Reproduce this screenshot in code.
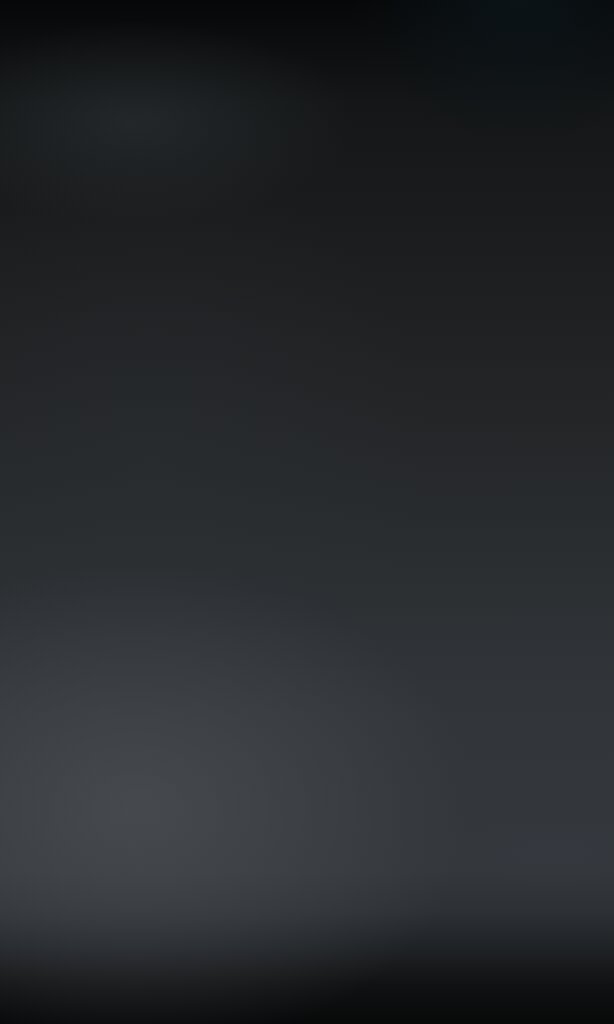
export default function App() {
  return (
    <main className="relative h-[1024px] w-full overflow-hidden bg-[#1c1d1f]">
      {/* base vertical fade */}
      <div className="absolute inset-0 bg-[linear-gradient(to_bottom,#060708_0%,#141617_10%,#1b1c1e_22%,#222426_38%,#2b2e31_55%,#32363a_70%,#33373b_85%,#2d3034_89%,#202326_92.5%,#111213_96%,#070808_100%)]" />
      {/* top-right cool tint */}
      <div className="absolute inset-0 bg-[radial-gradient(ellipse_40%_20%_at_85%_0%,rgba(12,22,26,0.8),transparent_70%)]" />
      {/* top-left glow */}
      <div className="absolute inset-0 bg-[radial-gradient(ellipse_36%_10%_at_22%_12%,rgba(44,50,53,0.6),transparent_100%)]" />
      {/* left mid glow */}
      <div className="absolute inset-0 bg-[radial-gradient(ellipse_45%_30%_at_25%_45%,rgba(46,50,54,0.35),transparent_100%)]" />
      {/* lower-left glow */}
      <div className="absolute inset-0 bg-[radial-gradient(ellipse_55%_24%_at_22%_79%,rgba(78,81,86,0.7),transparent_100%)]" />
      {/* lower-right bluish haze */}
      <div className="absolute inset-0 bg-[radial-gradient(ellipse_25%_5%_at_90%_83%,rgba(55,62,75,0.25),transparent_100%)]" />
    </main>
  );
}
